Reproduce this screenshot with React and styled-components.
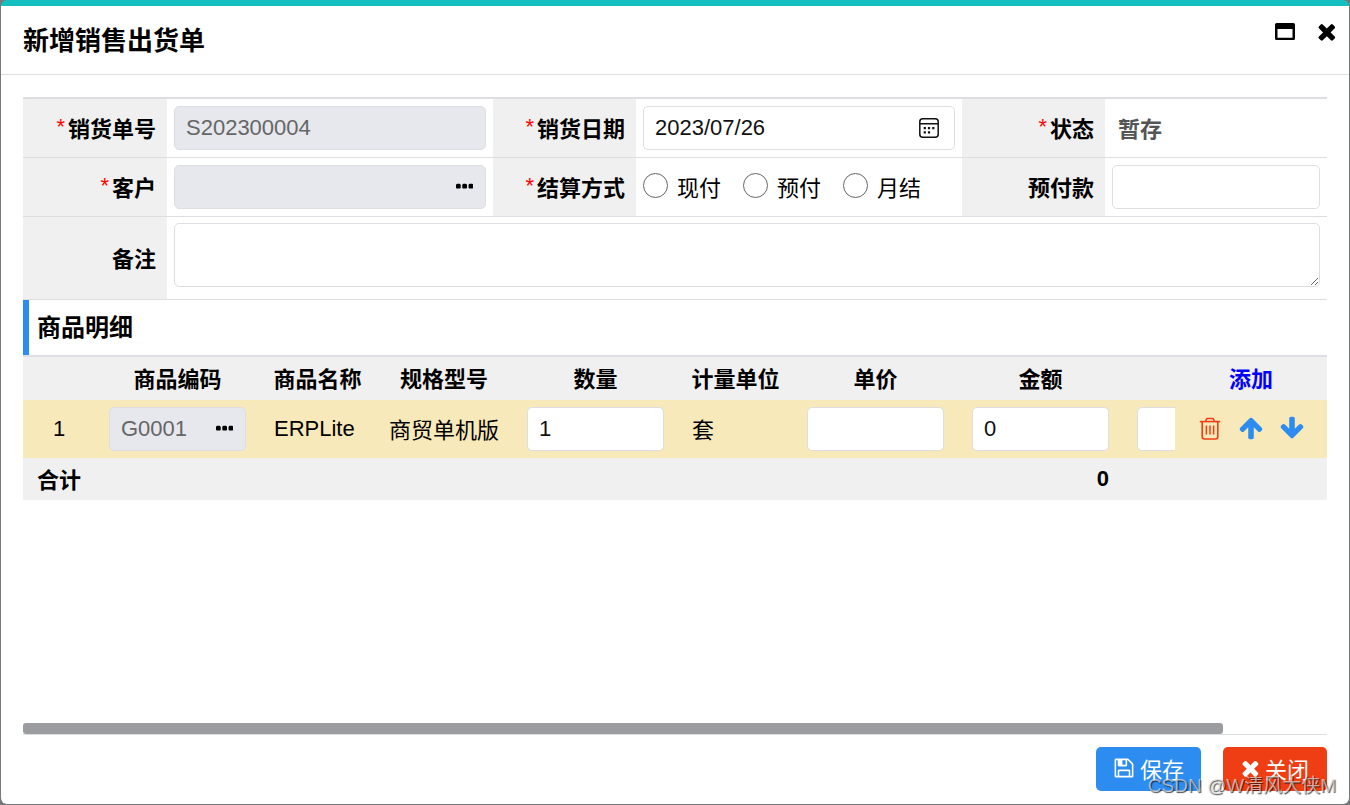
import React, { useEffect, useRef, useState } from "react";
import styled, { createGlobalStyle } from "styled-components";

// [path, left edge of the viewBox, width of the viewBox]
const icons = {
  save: [
    "M512 1536h768v-384h-768v384zM1408 1536h128v-896q0-14-10-38.5t-20-34.5l-281-281q-10-10-34-20t-39-10v416q0 40-28 68t-68 28h-576q-40 0-68-28t-28-68v-416h-128v1280h128v-416q0-40 28-68t68-28h832q40 0 68 28t28 68v416zM1024 608v-320q0-13-9.5-22.5t-22.5-9.5h-192q-13 0-22.5 9.5t-9.5 22.5v320q0 13 9.5 22.5t22.5 9.5h192q13 0 22.5-9.5t9.5-22.5zM1664 640v928q0 40-28 68t-68 28h-1344q-40 0-68-28t-28-68v-1344q0-40 28-68t68-28h928q40 0 88 20t76 48l280 280q28 28 48 76t20 88z",
    0,
    1792,
  ],
  close: [
    "M1490 1322q0 40-28 68l-136 136q-28 28-68 28t-68-28l-294-294-294 294q-28 28-68 28t-68-28l-136-136q-28-28-28-68t28-68l294-294-294-294q-28-28-28-68t28-68l136-136q28-28 68-28t68 28l294 294 294-294q28-28 68-28t68 28l136 136q28 28 28 68t-28 68l-294 294 294 294q28 28 28 68z",
    192,
    1408,
  ],
  more: [
    "M576 736v192q0 40-28 68t-68 28h-192q-40 0-68-28t-28-68v-192q0-40 28-68t68-28h192q40 0 68 28t28 68zm512 0v192q0 40-28 68t-68 28h-192q-40 0-68-28t-28-68v-192q0-40 28-68t68-28h192q40 0 68 28t28 68zm512 0v192q0 40-28 68t-68 28h-192q-40 0-68-28t-28-68v-192q0-40 28-68t68-28h192q40 0 68 28t28 68z",
    192,
    1408,
  ],
  up: [
    "M1675 971q0 51-37 90l-75 75q-38 38-91 38-54 0-90-38l-294-293v704q0 52-37.5 84.5t-90.5 32.5h-128q-53 0-90.5-32.5t-37.5-84.5v-704l-294 293q-36 38-90 38t-90-38l-75-75q-38-38-38-90 0-53 38-91l651-651q35-37 90-37 54 0 91 37l651 651q37 39 37 91z",
    0,
    1792,
  ],
};

const Icon = ({ name, size = 22, flip }) => {
  const [d, x, w] = icons[name];
  return (
    <svg height={size} viewBox={`${x} 0 ${w} 1792`} fill="currentColor" aria-hidden="true">
      <path d={d} transform={flip ? "matrix(1 0 0 -1 0 1792)" : undefined} />
    </svg>
  );
};

const MaximizeIcon = () => (
  <svg width="20" height="17" viewBox="0 0 20 17" aria-hidden="true">
    <path
      fillRule="evenodd"
      d="M1.6 0h16.8Q20 0 20 1.6v13.8q0 1.6-1.6 1.6H1.6Q0 17 0 15.4V1.6Q0 0 1.6 0zM2.5 6v8.7h15V6z"
    />
  </svg>
);

const CalendarIcon = () => (
  <svg width="20" height="20" viewBox="0 0 20 20" fill="none" stroke="#111" aria-hidden="true">
    <rect x="0.8" y="0.8" width="18.4" height="18.4" rx="3" strokeWidth="1.5" />
    <path d="M1 5.7h18" strokeWidth="1.5" />
    <path
      d="M8.9 10.2h2.2M13.2 10.2h2.2M4.7 10.2h2.2M4.7 14.4h2.2M8.9 14.4h2.2"
      strokeWidth="2.2"
    />
  </svg>
);

const TrashIcon = () => (
  <svg width="26" height="26" viewBox="0 0 26 26" fill="none" stroke="currentColor" aria-hidden="true">
    <path d="M2.8 6.6h20.4" strokeWidth="1.6" />
    <path d="M8.6 6.4l.7-2q.3-.9 1.300-.9h4.800q1 0 1.300.9l.7 2" strokeWidth="1.500" />
    <path d="M5.200 6.800v15q0 2.200 2.200 2.200h11.200q2.200 0 2.200-2.200v-15" strokeWidth="1.600" />
    <path d="M9.400 10.500v9M13 10.500v9M16.600 10.500v9" strokeWidth="1.500" />
  </svg>
);

const App = () => {
  const [date, setDate] = useState("2023/07/26");
  const [payment, setPayment] = useState("");
  const [quantity, setQuantity] = useState("1");
  const [amount, setAmount] = useState("0");
  const [thumb, setThumb] = useState({ left: 0, width: 100 });
  const scrollRef = useRef(null);

  const updateThumb = () => {
    const { scrollLeft, scrollWidth, clientWidth } = scrollRef.current;
    setThumb({
      left: (scrollLeft / scrollWidth) * 100,
      width: (clientWidth / scrollWidth) * 100,
    });
  };

  useEffect(() => {
    updateThumb();
    window.addEventListener("resize", updateThumb);
    return () => window.removeEventListener("resize", updateThumb);
  }, []);

  return (
    <>
      <GlobalStyle />
      <Dialog>
        <Header>
          <Title>新增销售出货单</Title>
          <WindowTools>
            <IconButton aria-label="最大化">
              <MaximizeIcon />
            </IconButton>
            <IconButton aria-label="关闭窗口">
              <Icon name="close" size={25} />
            </IconButton>
          </WindowTools>
        </Header>

        <Body>
          <Form>
            <Label htmlFor="billNo" $required>销货单号</Label>
            <Field>
              <Input id="billNo" defaultValue="S202300004" disabled />
            </Field>
            <Label htmlFor="billDate" $required>销货日期</Label>
            <Field>
              <InputBox>
                <BoxInput
                  id="billDate"
                  value={date}
                  onChange={(e) => setDate(e.target.value)}
                />
                <IconButton aria-label="选择日期">
                  <CalendarIcon />
                </IconButton>
              </InputBox>
            </Field>
            <Label as="div" $required>状态</Label>
            <Field>
              <Status>暂存</Status>
            </Field>

            <Label htmlFor="customer" $required>客户</Label>
            <Field>
              <InputBox $disabled>
                <BoxInput id="customer" disabled />
                <IconButton aria-label="选择客户">
                  <Icon name="more" />
                </IconButton>
              </InputBox>
            </Field>
            <Label as="div" id="payment" $required>结算方式</Label>
            <Field>
              <RadioGroup role="radiogroup" aria-labelledby="payment">
                {["现付", "预付", "月结"].map((item) => (
                  <RadioLabel key={item}>
                    <Radio
                      name="payment"
                      checked={payment === item}
                      onChange={() => setPayment(item)}
                    />
                    {item}
                  </RadioLabel>
                ))}
              </RadioGroup>
            </Field>
            <Label htmlFor="prepaid">预付款</Label>
            <Field>
              <Input id="prepaid" />
            </Field>

            <Label htmlFor="note">备注</Label>
            <Field $wide>
              <TextArea id="note" />
            </Field>
          </Form>

          <SectionTitle>商品明细</SectionTitle>

          <TableScroll ref={scrollRef} onScroll={updateThumb}>
            <Table>
              <colgroup>
                <Col $width={72} />
                <Col $width={165} />
                <Col $width={115} />
                <Col $width={138} />
                <Col $width={165} />
                <Col $width={115} />
                <Col $width={165} />
                <Col $width={165} />
                <Col $width={165} />
                <Col $width={152} />
              </colgroup>
              <thead>
                <HeadRow>
                  <Th />
                  <Th>商品编码</Th>
                  <Th>商品名称</Th>
                  <Th>规格型号</Th>
                  <Th>数量</Th>
                  <Th>计量单位</Th>
                  <Th>单价</Th>
                  <Th>金额</Th>
                  <Th />
                  <Th $sticky>
                    <AddLink href="#add">添加</AddLink>
                  </Th>
                </HeadRow>
              </thead>
              <tbody>
                <ItemRow>
                  <Td $align="center">1</Td>
                  <Td>
                    <InputBox $disabled>
                      <BoxInput aria-label="商品编码" defaultValue="G0001" disabled />
                      <IconButton aria-label="选择商品">
                        <Icon name="more" />
                      </IconButton>
                    </InputBox>
                  </Td>
                  <Td>ERPLite</Td>
                  <Td $cjk>商贸单机版</Td>
                  <Td>
                    <Input
                      aria-label="数量"
                      value={quantity}
                      onChange={(e) => setQuantity(e.target.value)}
                    />
                  </Td>
                  <Td $cjk>套</Td>
                  <Td>
                    <Input aria-label="单价" />
                  </Td>
                  <Td>
                    <Input
                      aria-label="金额"
                      value={amount}
                      onChange={(e) => setAmount(e.target.value)}
                    />
                  </Td>
                  <Td>
                    <Input aria-label="备注" />
                  </Td>
                  <Td $sticky>
                    <Actions>
                      <IconButton aria-label="删除" $color="#f03e14">
                        <TrashIcon />
                      </IconButton>
                      <IconButton aria-label="上移" $color="#2d8cf0">
                        <Icon name="up" size={26} />
                      </IconButton>
                      <IconButton aria-label="下移" $color="#2d8cf0">
                        <Icon name="up" size={26} flip />
                      </IconButton>
                    </Actions>
                  </Td>
                </ItemRow>
              </tbody>
              <tfoot>
                <TotalRow>
                  <Td colSpan={7} $cjk>合计</Td>
                  <Td $align="right">0</Td>
                  <Td />
                  <Td $sticky />
                </TotalRow>
              </tfoot>
            </Table>
          </TableScroll>
          <ScrollTrack>
            <ScrollThumb style={{ marginLeft: `${thumb.left}%`, width: `${thumb.width}%` }} />
          </ScrollTrack>
        </Body>

        <Footer>
          <Button $color="#2d8cf0">
            <Icon name="save" />
            保存
          </Button>
          <Button $color="#f03e14">
            <Icon name="close" size={24} />
            关闭
          </Button>
        </Footer>
        <Watermark>CSDN @W清风大侠M</Watermark>
      </Dialog>
    </>
  );
};

const GlobalStyle = createGlobalStyle`
  * {
    box-sizing: border-box;
  }

  body {
    margin: 0;
    background-color: #77787a;
  }

  body, button, input, textarea {
    font-family: "Liberation Sans", "Noto Sans CJK SC", sans-serif;
    font-size: 22px;
  }
`;

const Dialog = styled.div`
  position: relative;
  display: flex;
  flex-direction: column;
  min-height: calc(100vh - 1px);
  margin: 0 1px 1px;
  border-top: 6px solid #14bfc0;
  border-radius: 6px;
  background-color: #fff;
  color: #000;
  overflow: hidden;
`;

const Header = styled.header`
  display: flex;
  justify-content: space-between;
  height: 69px;
  padding: 0 12px 0 22px;
  border-bottom: 1px solid #dcdee2;
`;

const Title = styled.h1`
  margin: 0;
  font-size: 26px;
  line-height: 70px;
`;

const WindowTools = styled.div`
  display: flex;
  align-items: center;
  gap: 22px;
  height: 50px;
`;

const IconButton = styled.button`
  display: flex;
  flex-shrink: 0;
  padding: 0;
  border: none;
  background: none;
  color: ${({ $color }) => $color || "#000"};
  cursor: pointer;
`;

const Body = styled.main`
  display: flex;
  flex-direction: column;
  flex: 1;
  margin: 22px 22px 0;
  border-bottom: 1px solid #dcdee2;
`;

const Form = styled.form`
  display: grid;
  grid-template-columns: 144px 326fr 143px 326fr 143px 222fr;
  border-top: 2px solid #dcdee2;
`;

const Label = styled.label`
  display: flex;
  align-items: center;
  justify-content: flex-end;
  padding: 0 11px 3px 0;
  border-bottom: 1px solid #dcdee2;
  background-color: #f0f0f0;
  font-weight: bold;

  &::before {
    content: ${({ $required }) => ($required ? '"*"' : "none")};
    margin-right: 3px;
    color: #f00;
    font-weight: normal;
  }
`;

const Field = styled.div`
  display: flex;
  align-items: center;
  grid-column: ${({ $wide }) => ($wide ? "span 5" : "auto")};
  min-width: 0;
  min-height: ${({ $wide }) => ($wide ? "83px" : "59px")};
  padding: ${({ $wide }) => ($wide ? "6px 7px 12px" : "7px")};
  border-bottom: 1px solid #dcdee2;
`;

const Input = styled.input`
  display: block;
  width: 100%;
  height: 44px;
  padding: 0 11px;
  border: 1px solid #dcdee2;
  border-radius: 5px;
  background-color: #fff;
  color: #111;

  &:disabled {
    background-color: #e7e8ed;
    color: #666;
  }
`;

const InputBox = styled.div`
  display: flex;
  align-items: center;
  width: 100%;
  height: 44px;
  padding: 0 ${({ $disabled }) => ($disabled ? "12px" : "15px")} 0 11px;
  border: 1px solid #dcdee2;
  border-radius: 5px;
  background-color: ${({ $disabled }) => ($disabled ? "#e7e8ed" : "#fff")};
`;

const BoxInput = styled.input`
  flex: 1;
  min-width: 0;
  padding: 0;
  border: none;
  background: none;
  color: #111;

  &:disabled {
    color: #666;
  }
`;

const TextArea = styled.textarea`
  width: 100%;
  height: 64px;
  padding: 8px 11px;
  border: 1px solid #dcdee2;
  border-radius: 5px;
  resize: vertical;
`;

const Status = styled.strong`
  padding: 0 0 3px 6px;
  color: #555;
`;

const RadioGroup = styled.div`
  display: flex;
  gap: 22px;
  padding-bottom: 3px;
`;

const RadioLabel = styled.label`
  display: flex;
  align-items: center;
  gap: 9px;
`;

const Radio = styled.input.attrs({ type: "radio" })`
  appearance: none;
  width: 25px;
  height: 25px;
  margin: 0;
  border: 1px solid #666;
  border-radius: 50%;

  &:checked {
    border: 8px solid #2d8cf0;
  }
`;

const SectionTitle = styled.h2`
  margin: 0;
  padding-left: 8px;
  border-left: 6px solid #2d8cf0;
  font-size: 24px;
  line-height: 55px;
`;

const TableScroll = styled.div`
  flex: 1;
  border-top: 2px solid #dcdee2;
  overflow-x: auto;
  scrollbar-width: none;
`;

const ScrollTrack = styled.div`
  height: 11px;
  overflow: hidden;
`;

const ScrollThumb = styled.div`
  height: 100%;
  border-radius: 3px;
  background-color: #9b9ca0;
`;

const Table = styled.table`
  width: 1417px;
  table-layout: fixed;
  border-collapse: collapse;
`;

const Col = styled.col`
  width: ${({ $width }) => $width}px;
`;

const HeadRow = styled.tr`
  height: 43px;
  background-color: #f0f0f0;
`;

const ItemRow = styled.tr`
  height: 58px;
  background-color: #f8e9bb;
`;

const TotalRow = styled.tr`
  height: 42px;
  background-color: #f0f0f0;
  font-weight: bold;
`;

const Th = styled.th`
  position: ${({ $sticky }) => ($sticky ? "sticky" : "static")};
  right: 0;
  padding: 0 0 3px;
  background-color: inherit;
  white-space: nowrap;
`;

const Td = styled.td`
  position: ${({ $sticky }) => ($sticky ? "sticky" : "static")};
  right: 0;
  padding: 0 14px ${({ $cjk }) => ($cjk ? "3px" : "0")};
  background-color: inherit;
  text-align: ${({ $align }) => $align || "left"};
  white-space: nowrap;
`;

const AddLink = styled.a`
  color: #00f;
  text-decoration: none;
`;

const Actions = styled.div`
  display: flex;
  justify-content: center;
  gap: 15px;
  padding-bottom: 2px;
`;

const Footer = styled.footer`
  display: flex;
  justify-content: flex-end;
  gap: 22px;
  padding: 12px 22px 13px;
`;

const Button = styled.button`
  display: flex;
  align-items: center;
  justify-content: center;
  gap: 5px;
  min-width: 104px;
  height: 44px;
  padding: 0 17px 3px;
  border: none;
  border-radius: 5px;
  background-color: ${({ $color }) => $color};
  color: #fff;
  cursor: pointer;
`;

const Watermark = styled.div`
  position: absolute;
  right: 13px;
  bottom: 4px;
  color: rgba(225, 225, 225, 0.7);
  font-size: 19px;
  line-height: 28px;
  text-shadow: 1px 1px 1px rgba(0, 0, 0, 0.7);
  pointer-events: none;
`;

export default App;
